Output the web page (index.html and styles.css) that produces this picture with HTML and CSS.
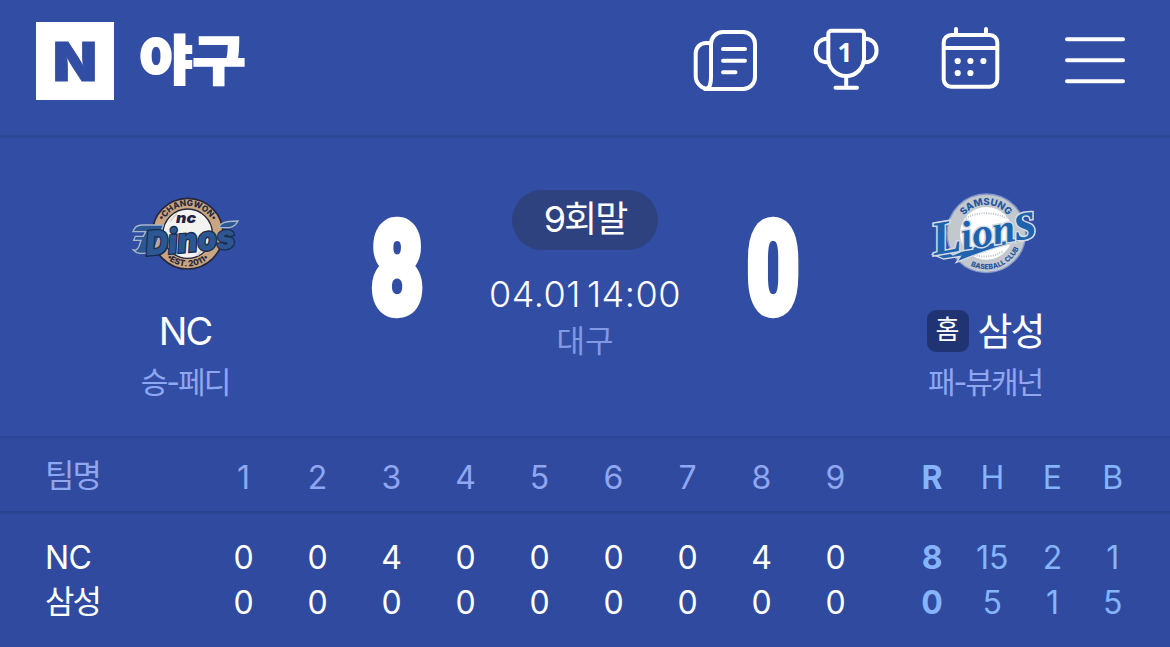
FILE: index.html
```html
<!DOCTYPE html>
<html lang="ko">
<head>
    <meta charset="UTF-8">
    <meta name="viewport" content="width=device-width, initial-scale=1.0">
    <title>야구</title>
    <link rel="stylesheet" href="styles.css">
</head>
<body>
    <header class="header">
        <svg class="logo" width="220" height="100" viewBox="0 0 220 100">
            <rect x="0" y="9" width="78" height="78" fill="#fff"/>
            <text class="logo-n" x="17" y="67.5" textLength="44" lengthAdjust="spacingAndGlyphs">N</text>
            <text class="logo-title" x="103.500" y="67" textLength="106" lengthAdjust="spacingAndGlyphs">야구</text>
        </svg>
        <nav class="menu">
            <svg class="icon" viewBox="0 0 68 72">
                <path d="M22 19h-5a10.300 10.300 0 0 0-10.300 10.300v22.700a13 13 0 0 0 13 13"/>
                <path d="M16 65c4 0 6-5 6-12V20a12 12 0 0 1 12-12h20a12 12 0 0 1 12 12v33a12 12 0 0 1-12 12H18"/>
                <path d="M34 25h22M34 36.700h22M34 48.300h12.500"/>
            </svg>
            <svg class="icon" viewBox="0 0 68 72">
                <path d="M18.300 6.700h29.700a3 3 0 0 1 3 3V34a17.850 18 0 0 1-35.700 0V9.700a3 3 0 0 1 3-3z"/>
                <path d="M15.300 14.700h-1.500a11 11 0 0 0-11 11v1.600a11 11 0 0 0 11 11h2M51 14.700h1.500a11 11 0 0 1 11 11v1.600a11 11 0 0 1-11 11h-2"/>
                <path d="M33.200 52v11M22.500 63.700h21.500"/>
                <text class="trophy-num" x="32" y="38">1</text>
            </svg>
            <svg class="icon" viewBox="0 0 68 72">
                <rect x="6.700" y="11" width="53.600" height="51.700" rx="7.500"/>
                <path d="M7 24h53M19 5v5M49 5v5"/>
                <g class="dots">
                    <circle cx="20.700" cy="37" r="3.100"/>
                    <circle cx="33.400" cy="37" r="3.100"/>
                    <circle cx="46.400" cy="37" r="3.100"/>
                    <circle cx="20.700" cy="49" r="3.100"/>
                    <circle cx="33.400" cy="49" r="3.100"/>
                </g>
            </svg>
            <svg class="icon" viewBox="0 0 68 72">
                <path d="M6 15.200h56M6 36.200h56M6 57.200h56"/>
            </svg>
        </nav>
    </header>

    <section class="game">
        <div class="team">
            <svg class="emblem" viewBox="0 0 390 285">
                <defs>
                    <path id="nc-top" d="M120 146a83 83 0 0 1 166 0"/>
                    <path id="nc-bottom" d="M105 146a98 98 0 0 0 196 0"/>
                </defs>
                <circle cx="203" cy="146" r="106" fill="#c9a582" stroke="#26273a" stroke-width="5"/>
                <circle cx="203" cy="146" r="74" fill="#f3f3f0" stroke="#26273a" stroke-width="4"/>
                <path d="M150 110l20-24M232 212l30-38" stroke="#d8cfc4" stroke-width="5"/>
                <text class="nc-ring"><textPath href="#nc-top" startOffset="50%">•CHANGWON•</textPath></text>
                <text class="nc-ring"><textPath href="#nc-bottom" startOffset="50%">•EST. 2011•</textPath></text>
                <text class="nc-small" x="168" y="115" textLength="60" lengthAdjust="spacingAndGlyphs">nc</text>
                <path class="nc-wing" d="M130 120H66c-14 0-23 7-27 20h38l-7 14H46l-5 12h22l-6 18c-4 10-9 13-17 11 10 12 24 12 60 8z"/>
                <path class="nc-wing" d="M296 128c6-14 16-19 58-20-6 12-14 18-26 20z"/>
                <g transform="rotate(-5 190 160)">
                    <text class="nc-word nc-outline" x="76" y="202" textLength="268" lengthAdjust="spacingAndGlyphs">Dinos</text>
                </g>
            </svg>
            <div class="team-name">NC</div>
            <div class="pitcher">승-페디</div>
        </div>

        <svg class="score" viewBox="0 0 90 180">
            <text x="45" y="132.500" transform="translate(45) scale(.72 1) translate(-45)">8</text>
        </svg>

        <div class="status">
            <div class="inning">9회말</div>
            <div class="date"><span>04.01</span><span>14:00</span></div>
            <div class="place">대구</div>
        </div>

        <svg class="score" viewBox="0 0 90 180">
            <text x="45" y="132.500" transform="translate(45) scale(.72 1) translate(-45)">0</text>
        </svg>

        <div class="team">
            <svg class="emblem" viewBox="0 0 390 285">
                <defs>
                    <path id="ss-top" d="M112 146a86 86 0 0 1 172 0"/>
                    <path id="ss-bottom" d="M92 146a107 107 0 0 0 214 0"/>
                </defs>
                <circle cx="199" cy="145" r="118" fill="#c3c8cf" stroke="#8397c8" stroke-width="4"/>
                <circle cx="199" cy="145" r="79" fill="#fff"/>
                <path d="M137 99q60-28 124 0M150 205q50 22 100-6" fill="none" stroke="#b9bfc9" stroke-width="6" stroke-dasharray="3 4"/>
                <text class="ss-ring"><textPath href="#ss-top" startOffset="50%">SAMSUNG</textPath></text>
                <text class="ss-ring ss-club"><textPath href="#ss-bottom" startOffset="61%">BASEBALL CLUB</textPath></text>
                <path class="ss-swoosh" d="M38 208l45-10 16 12q96-46 228-46-100 18-218 68l12-18-50 8z"/>
                <g transform="rotate(-10 190 150)">
                    <text class="ss-word" x="34" y="184" textLength="318" lengthAdjust="spacingAndGlyphs"><tspan font-size="142">L</tspan>ion<tspan font-size="165">s</tspan></text>
                </g>
            </svg>
            <div class="team-name"><span class="home">홈</span>삼성</div>
            <div class="pitcher">패-뷰캐넌</div>
        </div>
    </section>

    <section class="board">
        <div class="row row-head">
            <span class="name">팀명</span>
            <span>1</span><span>2</span><span>3</span><span>4</span><span>5</span><span>6</span><span>7</span><span>8</span><span>9</span>
            <span class="stat run">R</span><span class="stat">H</span><span class="stat">E</span><span class="stat">B</span>
        </div>
        <div class="rows">
            <div class="row">
                <span class="name name-en">NC</span>
                <span>0</span><span>0</span><span>4</span><span>0</span><span>0</span><span>0</span><span>0</span><span>4</span><span>0</span>
                <span class="stat run">8</span><span class="stat">15</span><span class="stat">2</span><span class="stat">1</span>
            </div>
            <div class="row">
                <span class="name">삼성</span>
                <span>0</span><span>0</span><span>0</span><span>0</span><span>0</span><span>0</span><span>0</span><span>0</span><span>0</span>
                <span class="stat run">0</span><span class="stat">5</span><span class="stat">1</span><span class="stat">5</span>
            </div>
        </div>
    </section>
</body>
</html>
```
FILE: styles.css
```css
* {
    box-sizing: border-box;
}

body {
    margin: 0;
    height: 647px;
    overflow: hidden;
    background: #324ea4;
    color: #fff;
    font-family: "Inter", "Noto Sans CJK KR", sans-serif;
}

svg {
    display: block;
}

/* header */
.header {
    display: flex;
    justify-content: space-between;
    height: 138px;
    padding: 13px 41px 0 36px;
    border-bottom: 3px solid #2e4899;
}

.logo-n {
    font-size: 54px;
    font-weight: 900;
    fill: #324ea4;
    stroke: #324ea4;
    stroke-width: 1;
}

.logo-title {
    font-family: "Noto Sans CJK KR", sans-serif;
    font-size: 53px;
    font-weight: 900;
    fill: #fff;
    stroke: #fff;
    stroke-width: 2;
}

.menu {
    display: flex;
    gap: 56px;
    padding-top: 11px;
}

.icon {
    width: 68px;
    height: 72px;
    fill: none;
    stroke: #fff;
    stroke-width: 4;
    stroke-linecap: round;
    stroke-linejoin: round;
}

.icon .dots {
    fill: #fff;
    stroke: none;
}

.trophy-num {
    fill: #fff;
    stroke: none;
    font-family: "Open Sans", sans-serif;
    font-size: 26px;
    font-weight: 700;
    text-anchor: middle;
}

/* game summary */
.game {
    display: grid;
    grid-template-columns: 210px 214px 162px 214px 210px;
    justify-content: center;
    height: 298px;
}

.team {
    display: flex;
    flex-direction: column;
    align-items: center;
    padding-top: 47px;
}

.emblem {
    width: 130px;
    height: 95px;
    margin-bottom: 25px;
}

.team-name {
    display: flex;
    align-items: center;
    gap: 9px;
    height: 52px;
    font-size: 38px;
    line-height: 52px;
    letter-spacing: -2px;
}

.home {
    width: 42px;
    height: 42px;
    border-radius: 9px;
    background: #203473;
    font-size: 26px;
    line-height: 40px;
    letter-spacing: 0;
    text-align: center;
}

.pitcher {
    font-size: 30px;
    line-height: 50px;
    letter-spacing: -2px;
    color: #8fa6f0;
}

.score {
    width: 90px;
    height: 180px;
    margin-top: 42px;
    justify-self: center;
}

.score text {
    font-family: "Roboto", sans-serif;
    font-size: 124px;
    font-weight: 700;
    text-anchor: middle;
    fill: #fff;
    stroke: #fff;
    stroke-width: 9;
    vector-effect: non-scaling-stroke;
}

.status {
    display: flex;
    flex-direction: column;
    align-items: center;
    padding-top: 52px;
    white-space: nowrap;
}

.inning {
    width: 146px;
    height: 60px;
    border-radius: 30px;
    background: #2e427f;
    font-size: 36px;
    line-height: 58px;
    letter-spacing: -2px;
    text-align: center;
}

.date {
    display: flex;
    gap: 6px;
    margin-top: 21px;
    font-size: 36px;
    font-weight: 300;
    line-height: 46px;
    letter-spacing: 0.5px;
}

.place {
    font-size: 31px;
    line-height: 48px;
    color: #8299e4;
}

/* inning scoreboard */
.board {
    height: 211px;
    border-top: 2px solid #2d4799;
    background: #2f4a9e;
    font-size: 32px;
}

.row {
    display: grid;
    grid-template-columns: 161.5px repeat(9, 74px) 29.5px repeat(4, 60.2px);
    height: 45px;
    padding-left: 45px;
    line-height: 45px;
    text-align: center;
}

.row .name {
    margin-top: -1px;
    text-align: left;
    letter-spacing: -2px;
}

.row .name-en {
    margin-top: 0;
    letter-spacing: -0.5px;
}

.row .stat {
    color: #85b3fc;
}

.row .run {
    grid-column: 12;
    font-weight: 700;
}

.row-head {
    height: 76px;
    border-bottom: 3px solid #2a4492;
    line-height: 80px;
    color: #8fa6f0;
}

.row-head .name {
    margin-top: -2px;
}

.rows {
    padding-top: 21px;
}

/* emblem lettering */
.nc-ring {
    font-size: 25px;
    font-weight: 800;
    fill: #26273a;
    text-anchor: middle;
}

.nc-small {
    font-size: 44px;
    font-weight: 900;
    font-style: italic;
    fill: #1d2440;
}

.nc-word {
    font-size: 100px;
    font-weight: 900;
    font-style: italic;
    fill: #2c5792;
}

.nc-outline {
    stroke: #1b2c50;
    stroke-width: 8;
    paint-order: stroke;
}

.nc-wing {
    fill: #2c5792;
    stroke: #a9b7c9;
    stroke-width: 4;
}

.ss-ring {
    font-size: 29px;
    font-weight: 800;
    fill: #24589f;
    text-anchor: middle;
}

.ss-club {
    font-size: 21px;
}

.ss-word {
    font-family: "Liberation Serif", serif;
    font-size: 122px;
    font-weight: 700;
    font-style: italic;
    fill: #1f62ad;
    stroke: #d5dae2;
    stroke-width: 9;
    paint-order: stroke;
}

.ss-swoosh {
    fill: #1f62ad;
    stroke: #d5dae2;
    stroke-width: 4;
}
```
